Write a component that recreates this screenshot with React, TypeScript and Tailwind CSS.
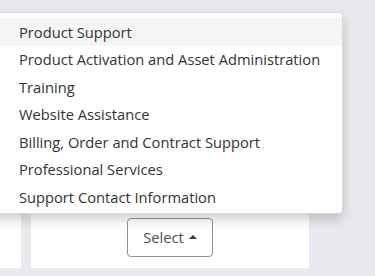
import React from "react";

const items = [
  "Product Support",
  "Product Activation and Asset Administration",
  "Training",
  "Website Assistance",
  "Billing, Order and Contract Support",
  "Professional Services",
  "Support Contact Information",
];

const App = () => {
  return (
    <div
      className="relative h-[276px] w-[375px] overflow-hidden bg-[#e9eaee]"
      style={{ fontFamily: '"Open Sans", sans-serif' }}
    >
      <div className="flex gap-[10px] pt-[14px]">
        <div className="h-[254px] w-[21px] bg-white" />
        <div className="flex h-[254px] w-[278px] flex-col items-center justify-end bg-white pb-[11px]">
          <button className="flex h-[39px] w-[86px] items-center justify-center gap-[5px] rounded-[4px] border border-[#8d949b] bg-white text-[14.7px] text-[#495057]">
            Select
            <span className="mb-[1px] h-0 w-0 border-x-[4px] border-b-[4px] border-x-transparent border-b-[#343a40]" />
          </button>
        </div>
      </div>

      <div className="absolute left-[-10px] top-[12px] w-[353px] rounded-[4px] border border-[#d5d7da] bg-white pt-[5px] pb-[2px] shadow-[0_6px_12px_rgba(0,0,0,0.18)]">
        {items.map((item, i) => (
          <div
            key={item}
            className={`flex h-[27.5px] items-center pl-[28px] text-[14.7px] text-[#333] ${
              i === 0 ? "bg-[#f5f5f5]" : ""
            }`}
          >
            {item}
          </div>
        ))}
      </div>
    </div>
  );
};

export default App;
